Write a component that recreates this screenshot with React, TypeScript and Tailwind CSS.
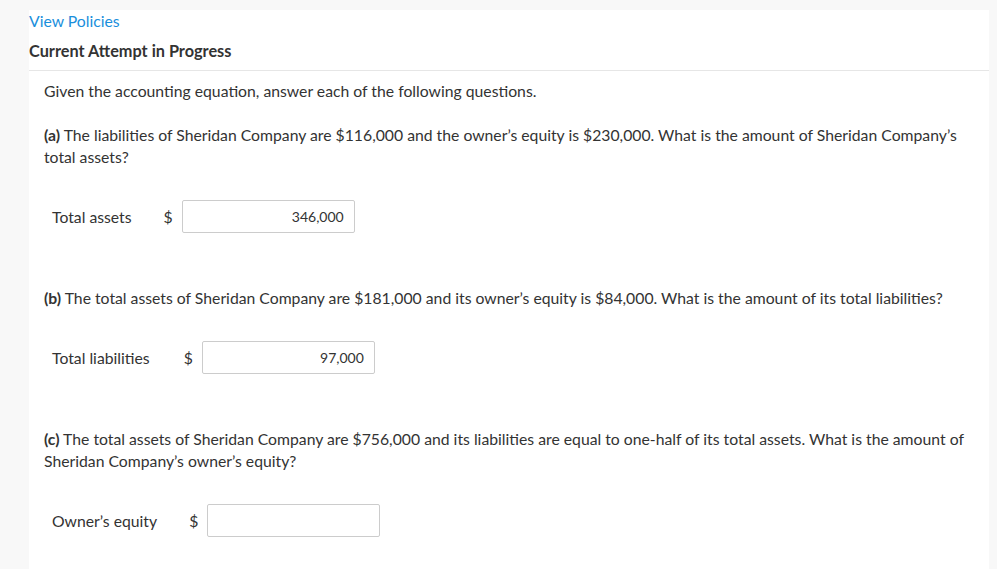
import React from "react";

function Row({ label, value, gap }: { label: string; value: string; gap: string }) {
  return (
    <div className="flex items-center pl-[8px]">
      <span className="text-[15.75px] leading-[22px]">{label}</span>
      <span className={`text-[15.75px] leading-[22px] ${gap}`}>$</span>
      <div className="ml-[9px] w-[173px] h-[33px] border border-[#cccccc] rounded-[2px] bg-white flex items-center justify-end pr-[10px] text-[14px] text-[#333]">
        {value}
      </div>
    </div>
  );
}

export default function App() {
  return (
    <div
      className="h-[569px] bg-[#f8f8f8] pt-[10px] pl-[29px] pr-[8px] text-[#333333] overflow-hidden"
      style={{ fontFamily: "Lato, 'Open Sans', sans-serif" }}
    >
      <div className="bg-white h-full">
        <div className="border-b border-[#e6e6e6] pb-[8px]">
          <div className="text-[15.75px] leading-[22px] text-[#1a8fdc]">View Policies</div>
          <div className="mt-[8px] text-[16.3px] leading-[22px] font-bold text-[#333]">Current Attempt in Progress</div>
        </div>
        <div className="px-[15px] pt-[9px] text-[15.75px] leading-[22px]">
          <p>Given the accounting equation, answer each of the following questions.</p>
          <p className="mt-[22px]">
            <b>(a)</b> The liabilities of Sheridan Company are $116,000 and the owner’s equity is $230,000. What is the amount of Sheridan Company’s total assets?
          </p>
          <div className="mt-[32px]">
            <Row label="Total assets" value="346,000" gap="ml-[32px]" />
          </div>
          <p className="mt-[54px]">
            <b>(b)</b> The total assets of Sheridan Company are $181,000 and its owner’s equity is $84,000. What is the amount of its total liabilities?
          </p>
          <div className="mt-[32px]">
            <Row label="Total liabilities" value="97,000" gap="ml-[34px]" />
          </div>
          <p className="mt-[54px]">
            <b>(c)</b> The total assets of Sheridan Company are $756,000 and its liabilities are equal to one-half of its total assets. What is the amount of Sheridan Company’s owner’s equity?
          </p>
          <div className="mt-[32px]">
            <Row label="Owner’s equity" value="" gap="ml-[32px]" />
          </div>
        </div>
      </div>
    </div>
  );
}
